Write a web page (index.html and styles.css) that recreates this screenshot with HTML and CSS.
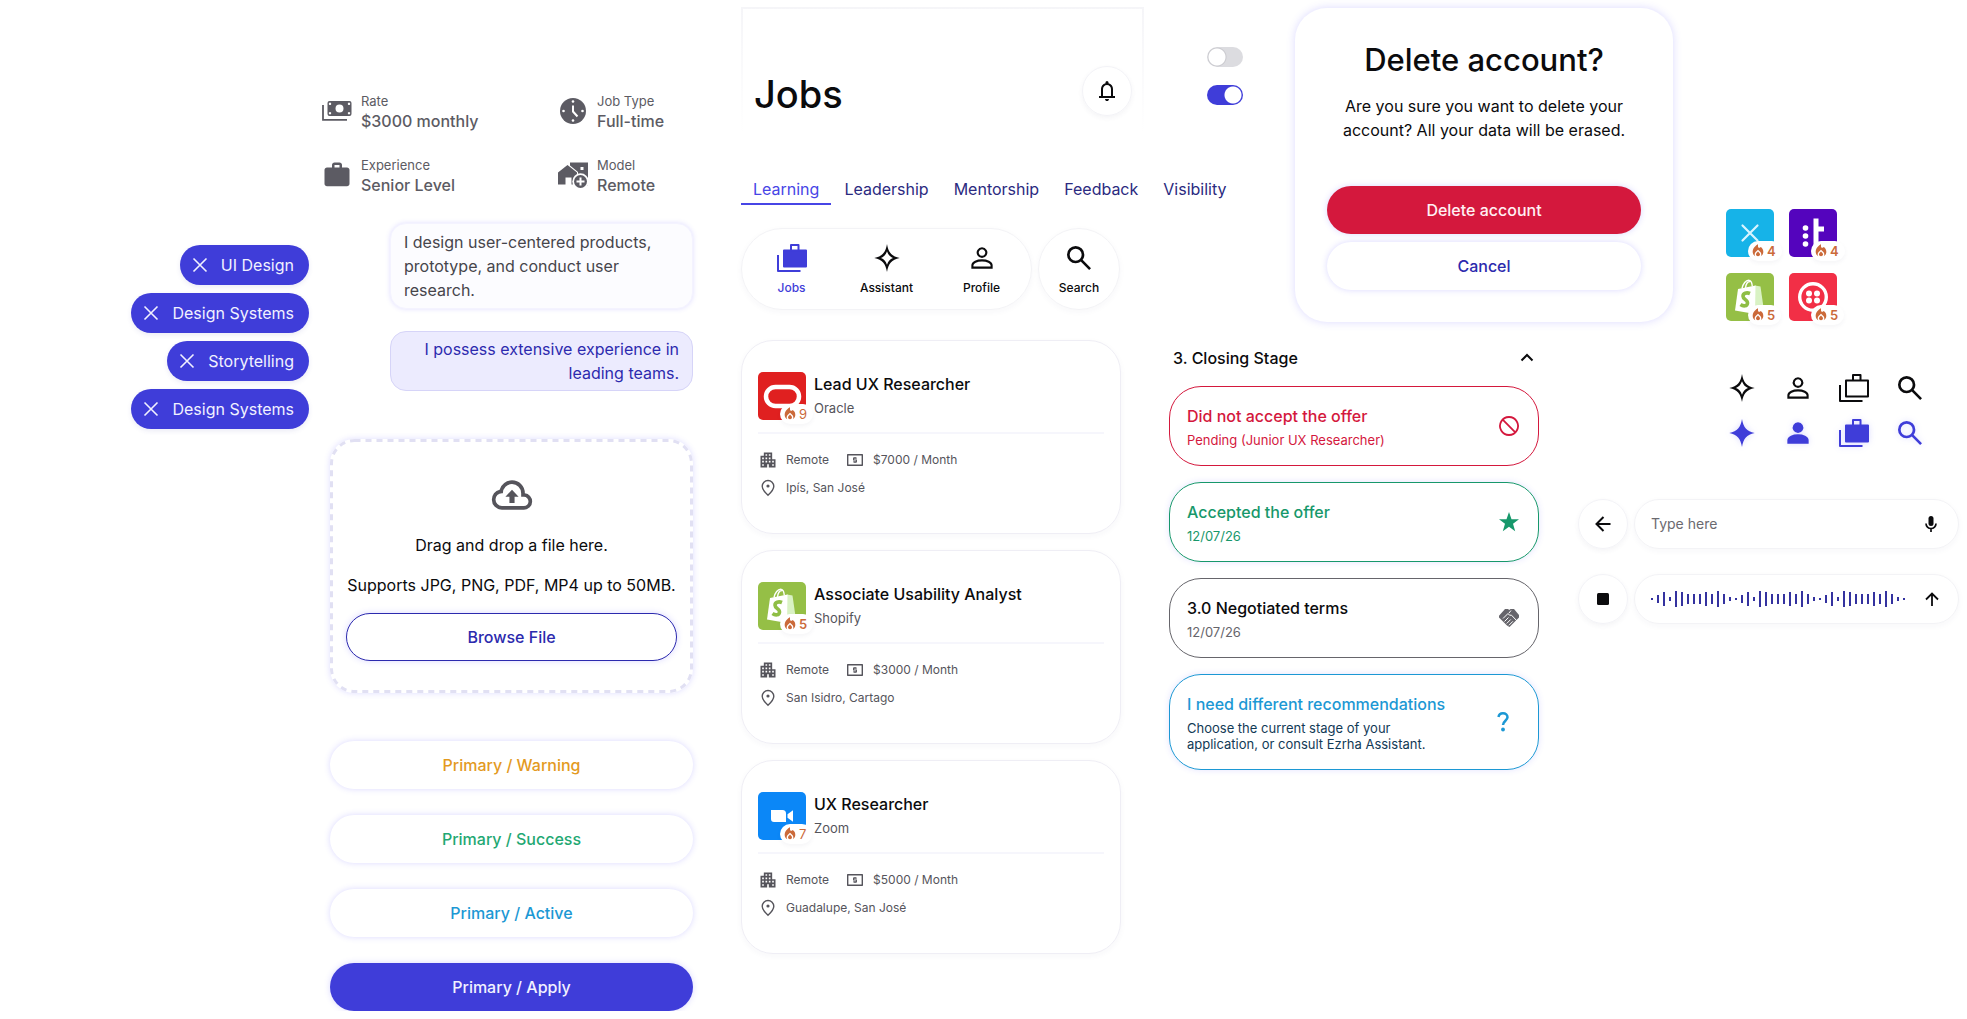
FILE: index.html
```html
<!DOCTYPE html>
<html lang="en">
  <head>
    <meta charset="UTF-8" />
    <meta name="viewport" content="width=device-width, initial-scale=1.0" />
    <title>Ezrha components</title>
    <link rel="stylesheet" href="styles.css">
  </head>
  <body>
    <!-- icon sprite -->
    <svg class="sprite" aria-hidden="true">
      <symbol id="close" viewBox="0 0 16 16"><path d="M1.5 1.5l13 13M14.5 1.5l-13 13" fill="none" stroke="currentColor" stroke-width="1.6" /></symbol>
      <symbol id="cash" viewBox="0 0 30 20">
        <path fill-rule="evenodd" d="M7.500 0h20a2 2 0 0 1 2 2v11a2 2 0 0 1-2 2h-20a2 2 0 0 1-2-2v-11a2 2 0 0 1 2-2zM17.500 3.500a4 4 0 1 0 0 8a4 4 0 1 0 0-8zM8 1.600a1.200 1.200 0 1 0 .01 0zM27 1.600a1.200 1.200 0 1 0 .01 0zM8 11a1.200 1.200 0 1 0 .01 0zM27 11a1.200 1.200 0 1 0 .01 0z" />
        <path d="M1 4v14.800h24" fill="none" stroke="currentColor" stroke-width="1.800" />
      </symbol>
      <symbol id="clock" viewBox="0 0 26 26">
        <circle cx="13" cy="13" r="13" />
        <path d="M13 7.500v6l4.500 5" fill="none" stroke="#fff" stroke-width="2" />
        <g fill="#fff"><circle cx="13" cy="3.500" r="1.300" /><circle cx="13" cy="22.500" r="1.300" /><circle cx="3.500" cy="13" r="1.300" /><circle cx="22.500" cy="13" r="1.300" /></g>
      </symbol>
      <symbol id="briefcase" viewBox="0 0 24 24"><path d="M4 21q-.825 0-1.412-.587T2 19V8q0-.825.588-1.412T4 6h4V4q0-.825.588-1.412T10 2h4q.825 0 1.413.588T16 4v2h4q.825 0 1.413.588T22 8v11q0 .825-.587 1.413T20 21zm6-15h4V4h-4z" /></symbol>
      <symbol id="home-work" viewBox="0 0 30 27">
        <path d="M0 23V11l9.500-7.500L19 11v12h-5.500v-7h-6v7z" />
        <path d="M12 1h18v23H20V10.500L12 4z" />
        <path d="M22.500 5.500h3v3h-3z" fill="#fff" />
        <circle cx="22.500" cy="20" r="8.200" fill="#fff" />
        <circle cx="22.500" cy="20" r="6.500" />
        <path d="M22.500 16v8M18.500 20h8" fill="none" stroke="#fff" stroke-width="2" />
      </symbol>
      <symbol id="cloud" viewBox="0 0 24 24">
        <path d="M6.500 20q-2.275 0-3.887-1.575T1 14.575q0-1.950 1.175-3.475T5.250 9.150q.625-2.300 2.500-3.725T12 4q2.925 0 4.963 2.038T19 11q1.725.2 2.863 1.488T23 15.500q0 1.875-1.312 3.188T18.500 20zm0-2h12q1.050 0 1.775-.725T21 15.500t-.725-1.775T18.500 13H17v-2q0-2.075-1.463-3.537T12 6T8.463 7.463T7 11h-.5q-1.450 0-2.475 1.025T3 14.500t1.025 2.475T6.500 18" />
        <path d="M10.600 16.300v-3.300H8.400L12 9.100l3.600 3.900h-2.200v3.300z" />
      </symbol>
      <symbol id="bell" viewBox="0 0 24 24"><path d="M4 19v-2h2v-7q0-2.075 1.250-3.687T10.500 4.200v-.7q0-.625.438-1.062T12 2t1.063.438T13.500 3.500v.7q2 .5 3.250 2.113T18 10v7h2v2zm8 3q-.825 0-1.412-.587T10 20h4q0 .825-.587 1.413T12 22m-4-5h8v-7q0-1.650-1.175-2.825T12 6T9.175 7.175T8 10z" /></symbol>
      <symbol id="jobs" viewBox="0 0 30 28">
        <path d="M7 6.500h22v16H7z" fill="none" stroke="currentColor" stroke-width="2" stroke-linejoin="round" />
        <path d="M14 6V1h7.500v5M1 11v16h22.500" fill="none" stroke="currentColor" stroke-width="2" stroke-linejoin="round" />
      </symbol>
      <symbol id="jobs-fill" viewBox="0 0 30 28">
        <path d="M7 6.500h22v16H7z" stroke="currentColor" stroke-width="2" stroke-linejoin="round" />
        <path d="M14 6V1h7.500v5M1 11v16h22.500" fill="none" stroke="currentColor" stroke-width="2" stroke-linejoin="round" />
      </symbol>
      <symbol id="spark" viewBox="0 0 26 28"><path fill-rule="evenodd" d="M13 0c1.500 8.500 4.500 12.300 12.700 14c-8.200 1.700-11.200 5.500-12.700 14c-1.500-8.500-4.500-12.300-12.700-14c8.200-1.700 11.200-5.500 12.700-14zM13 7.300c-1.300 3.500-2.900 5.400-6 6.700c3.100 1.300 4.700 3.200 6 6.700c1.300-3.500 2.900-5.400 6-6.700c-3.100-1.300-4.700-3.200-6-6.700z" /></symbol>
      <symbol id="spark-fill" viewBox="0 0 26 28"><path d="M13 0c1.500 8.500 4.500 12.300 12.700 14c-8.200 1.700-11.200 5.500-12.700 14c-1.500-8.500-4.500-12.300-12.700-14c8.200-1.700 11.200-5.500 12.700-14z" /></symbol>
      <symbol id="person" viewBox="0 0 32 32"><path d="M16 6.300a4.300 4.300 0 1 0 .01 0zM6.400 25.600v-2.300c0-3.100 4.600-4.900 9.600-4.900s9.600 1.800 9.600 4.900v2.300z" fill="none" stroke="currentColor" stroke-width="2.100" /></symbol>
      <symbol id="person-fill" viewBox="0 0 32 32"><path d="M16 6.300a4.300 4.300 0 1 0 .01 0zM6.400 25.600v-2.300c0-3.100 4.600-4.900 9.600-4.900s9.600 1.800 9.600 4.900v2.300z" stroke="currentColor" stroke-width="2.100" /></symbol>
      <symbol id="search" viewBox="0 0 24 24"><path d="m19.600 21l-6.300-6.300q-.75.6-1.725.95T9.500 16q-2.725 0-4.612-1.888T3 9.500t1.888-4.612T9.500 3t4.613 1.888T16 9.500q0 1.100-.35 2.075T14.700 13.300l6.300 6.300zM9.500 14q1.875 0 3.188-1.312T14 9.500t-1.312-3.187T9.500 5T6.313 6.313T5 9.500t1.313 3.188T9.500 14" /></symbol>
      <symbol id="building" viewBox="0 0 24 24"><path d="M3 21V7h4V3h10v8h4v10h-8v-4h-2v4zm2-2h2v-2H5zm0-4h2v-2H5zm0-4h2V9H5zm4 4h2v-2H9zm0-4h2V9H9zm0-4h2V5H9zm4 8h2v-2h-2zm0-4h2V9h-2zm0-4h2V5h-2zm4 12h2v-2h-2zm0-4h2v-2h-2z" /></symbol>
      <symbol id="money" viewBox="0 0 20 20">
        <path d="M2.700 4.700h14.600v10.600H2.700z" fill="none" stroke="currentColor" stroke-width="1.400" stroke-linejoin="round" />
        <path d="M11.700 8.100H8.600v1.900h2.800v1.900H8.300M10 6.900v1.200M10 11.900v1.200" fill="none" stroke="currentColor" stroke-width="1.100" />
      </symbol>
      <symbol id="pin" viewBox="0 0 20 20">
        <path d="M10 17.300c-3.600-3.300-5.800-6-5.800-9a5.800 5.800 0 0 1 11.600 0c0 3-2.200 5.700-5.800 9z" fill="none" stroke="currentColor" stroke-width="1.400" />
        <circle cx="10" cy="8" r="1.600" />
      </symbol>
      <symbol id="flame" viewBox="0 0 24 24"><path d="M12 12.900l-2.130 2.090C9.310 15.550 9 16.280 9 17.060 9 18.680 10.350 20 12 20s3-1.320 3-2.940c0-.78-.31-1.520-.87-2.070z" /><path d="M16 6l-.44.55C14.380 8.020 12 7.190 12 5.300V2S4 6 4 13c0 2.920 1.560 5.470 3.890 6.860C7.330 19.070 7 18.100 7 17.060c0-1.320.52-2.560 1.470-3.500L12 10.100l3.530 3.470C16.480 14.500 17 15.740 17 17.070c0 1.020-.31 1.960-.85 2.750 1.890-1.150 3.290-3.060 3.710-5.300.66-3.550-1.070-6.900-3.860-8.520z" /></symbol>
      <symbol id="chevron" viewBox="0 0 14 14"><path d="M1.500 9.500L7 4l5.500 5.500" fill="none" stroke="currentColor" stroke-width="2" /></symbol>
      <symbol id="block" viewBox="0 0 20 20"><path d="M10 1a9 9 0 1 0 .01 0zM3.700 3.700l12.600 12.600" fill="none" stroke="currentColor" stroke-width="1.800" /></symbol>
      <symbol id="star" viewBox="0 0 20 20"><path d="M10 0l2.500 7.200H20l-6 4.600 2.200 7.400-6.200-4.500-6.200 4.500L6 11.800 0 7.200h7.500z" /></symbol>
      <symbol id="handshake" viewBox="0 0 20 20">
        <path d="M0 7.800L6 1h3l1.200.9L11.500 1H15l5 6v2.500L10.500 19 8 17.500 0 9.500z" />
        <path d="M4 10.500l5-5 1.500 1.700h2L18 13M5.500 13.500l4-4M7.700 15.500l4-4M9.900 17.300l4-4M10 5l2-2.500" fill="none" stroke="#fff" stroke-width="1" />
      </symbol>
      <symbol id="question" viewBox="0 0 12 20">
        <path d="M1.500 5A4.500 4.300 0 0 1 6 1.300c2.600 0 4.500 1.700 4.500 4 0 3.200-4.500 3.800-4.500 7.700" fill="none" stroke="currentColor" stroke-width="2.500" />
        <circle cx="6" cy="17.500" r="1.900" />
      </symbol>
      <symbol id="back" viewBox="0 0 16 16"><path d="M15.500 8H1.500M8.500 1L1.500 8l7 7" fill="none" stroke="currentColor" stroke-width="2" /></symbol>
      <symbol id="up" viewBox="0 0 14 14"><path d="M7 14V1.500M1 7.500l6-6 6 6" fill="none" stroke="currentColor" stroke-width="1.800" /></symbol>
      <symbol id="stop" viewBox="0 0 12 12"><rect width="12" height="12" rx="1.500" /></symbol>
      <symbol id="mic" viewBox="0 0 12 16">
        <rect x="3.500" width="5" height="10" rx="2.500" />
        <path d="M1 7.500a5 5 0 0 0 10 0M6 12.500V16" fill="none" stroke="currentColor" stroke-width="1.700" />
      </symbol>
      <!-- company logos -->
      <symbol id="oracle" viewBox="0 0 48 48"><rect x="8" y="15" width="33" height="19" rx="9.500" fill="none" stroke="#fff" stroke-width="4.500" /></symbol>
      <symbol id="shopify" viewBox="0 0 48 48">
        <path d="M29 12.500l5.500 1L38 38l-9 3z" fill="#d9f2c4" />
        <path d="M12 16l17.500-3.500L29 41 9 37.500z" fill="#fff" />
        <path d="M16 15.500c1-5 4-8.300 6.500-8.300 2 0 3.500 2 3.800 6M19.500 15c.5-4 2.500-6.500 4.500-6.500" fill="none" stroke="#fff" stroke-width="1.400" />
        <path d="M24 20.500c-3.500-1.500-7-.2-7 2.700 0 3.300 5 3.600 4.500 7-.4 3-4 3.500-7 1.300" fill="none" stroke="#8fbe45" stroke-width="3.600" />
      </symbol>
      <symbol id="zoom" viewBox="0 0 48 48"><path d="M13 18h11.500a3.500 3.500 0 0 1 3.500 3.500V30H16a3 3 0 0 1-3-3zM29.500 22.300l5.500-4v11.400l-5.500-4z" fill="#fff" /></symbol>
      <symbol id="cross" viewBox="0 0 48 48"><path d="M16.500 16.500l15 15M31.500 16.500l-15 15" fill="none" stroke="#d8f4ff" stroke-width="2.200" stroke-linecap="round" /></symbol>
      <symbol id="dots-t" viewBox="0 0 48 48">
        <path d="M24.500 9.500h5v8h5.500v5h-5.500V40h-5z" fill="#fff" />
        <g fill="#fff"><circle cx="16.500" cy="19" r="2.800" /><circle cx="16.500" cy="27" r="2.800" /><circle cx="16.500" cy="35" r="2.800" /></g>
      </symbol>
      <symbol id="twilio" viewBox="0 0 48 48">
        <circle cx="24" cy="24" r="13.300" fill="none" stroke="#fff" stroke-width="3.400" />
        <g fill="#fff"><circle cx="20" cy="20.500" r="3" /><circle cx="28" cy="20.500" r="3" /><circle cx="20" cy="27.500" r="3" /><circle cx="28" cy="27.500" r="3" /></g>
      </symbol>
    </svg>

    <main class="board">
      <section class="chips">
        <button class="chip"><svg><use href="#close" /></svg>UI Design</button>
        <button class="chip"><svg><use href="#close" /></svg>Design Systems</button>
        <button class="chip"><svg><use href="#close" /></svg>Storytelling</button>
        <button class="chip"><svg><use href="#close" /></svg>Design Systems</button>
      </section>

      <section class="profile">
        <dl class="facts">
          <div class="fact">
            <svg class="fact-icon"><use href="#cash" /></svg>
            <dt>Rate</dt>
            <dd>$3000 monthly</dd>
          </div>
          <div class="fact">
            <svg class="fact-icon small"><use href="#clock" /></svg>
            <dt>Job Type</dt>
            <dd>Full-time</dd>
          </div>
          <div class="fact">
            <svg class="fact-icon"><use href="#briefcase" /></svg>
            <dt>Experience</dt>
            <dd>Senior Level</dd>
          </div>
          <div class="fact">
            <svg class="fact-icon"><use href="#home-work" /></svg>
            <dt>Model</dt>
            <dd>Remote</dd>
          </div>
        </dl>

        <div class="chat">
          <p class="bubble">I design user-centered products, prototype, and conduct user research.</p>
          <p class="bubble mine">I possess extensive experience in leading teams.</p>
        </div>

        <div class="upload">
          <svg class="upload-border" aria-hidden="true"><rect x="1.5" y="1.5" rx="23" /></svg>
          <svg class="upload-icon"><use href="#cloud" /></svg>
          <p>Drag and drop a file here.</p>
          <p>Supports JPG, PNG, PDF, MP4 up to 50MB.</p>
          <button class="btn outline">Browse File</button>
        </div>

        <div class="buttons">
          <button class="btn warning">Primary / Warning</button>
          <button class="btn success">Primary / Success</button>
          <button class="btn active">Primary / Active</button>
          <button class="btn apply">Primary / Apply</button>
        </div>
      </section>

      <div class="app">
        <div class="top">
          <div class="navigation">
            <div class="header-row">
              <header class="page-header">
                <h1>Jobs</h1>
                <button class="round" aria-label="Notifications"><svg class="icon-24"><use href="#bell" /></svg></button>
              </header>
              <div class="toggles">
                <input type="checkbox" class="toggle" aria-label="Alerts" />
                <input type="checkbox" class="toggle" aria-label="Messages" checked />
              </div>
            </div>

            <nav class="tabs">
              <a href="#" class="current">Learning</a>
              <a href="#">Leadership</a>
              <a href="#">Mentorship</a>
              <a href="#">Feedback</a>
              <a href="#">Visibility</a>
            </nav>

            <nav class="dock">
              <div class="dock-group">
                <a href="#" class="current"><svg class="icon-30"><use href="#jobs-fill" /></svg>Jobs</a>
                <a href="#"><svg class="icon-28"><use href="#spark" /></svg>Assistant</a>
                <a href="#"><svg class="icon-32"><use href="#person" /></svg>Profile</a>
              </div>
              <a href="#" class="dock-search"><svg class="icon-32"><use href="#search" /></svg>Search</a>
            </nav>
          </div>

          <section class="modal">
            <h2>Delete account?</h2>
            <p>Are you sure you want to delete your account? All your data will be erased.</p>
            <button class="btn danger">Delete account</button>
            <button class="btn cancel">Cancel</button>
          </section>

          <div class="logos">
            <div class="logo cross"><svg><use href="#cross" /></svg><span class="badge"><svg><use href="#flame" /></svg>4</span></div>
            <div class="logo dots"><svg><use href="#dots-t" /></svg><span class="badge"><svg><use href="#flame" /></svg>4</span></div>
            <div class="logo shopify"><svg><use href="#shopify" /></svg><span class="badge"><svg><use href="#flame" /></svg>5</span></div>
            <div class="logo twilio"><svg><use href="#twilio" /></svg><span class="badge"><svg><use href="#flame" /></svg>5</span></div>
          </div>
        </div>

        <div class="bottom">
          <section class="jobs">
            <article class="job">
              <div class="job-head">
                <div class="logo oracle"><svg><use href="#oracle" /></svg><span class="badge light"><svg><use href="#flame" /></svg>9</span></div>
                <div>
                  <h3>Lead UX Researcher</h3>
                  <p>Oracle</p>
                </div>
              </div>
              <ul class="job-info">
                <li><svg><use href="#building" /></svg>Remote</li>
                <li><svg><use href="#money" /></svg>$7000 / Month</li>
                <li class="place"><svg><use href="#pin" /></svg>Ipís, San José</li>
              </ul>
            </article>
            <article class="job">
              <div class="job-head">
                <div class="logo shopify"><svg><use href="#shopify" /></svg><span class="badge"><svg><use href="#flame" /></svg>5</span></div>
                <div>
                  <h3>Associate Usability Analyst</h3>
                  <p>Shopify</p>
                </div>
              </div>
              <ul class="job-info">
                <li><svg><use href="#building" /></svg>Remote</li>
                <li><svg><use href="#money" /></svg>$3000 / Month</li>
                <li class="place"><svg><use href="#pin" /></svg>San Isidro, Cartago</li>
              </ul>
            </article>
            <article class="job">
              <div class="job-head">
                <div class="logo zoom"><svg><use href="#zoom" /></svg><span class="badge light"><svg><use href="#flame" /></svg>7</span></div>
                <div>
                  <h3>UX Researcher</h3>
                  <p>Zoom</p>
                </div>
              </div>
              <ul class="job-info">
                <li><svg><use href="#building" /></svg>Remote</li>
                <li><svg><use href="#money" /></svg>$5000 / Month</li>
                <li class="place"><svg><use href="#pin" /></svg>Guadalupe, San José</li>
              </ul>
            </article>
          </section>

          <section class="stages">
            <button class="stage-toggle" aria-expanded="true">3. Closing Stage<svg><use href="#chevron" /></svg></button>
            <article class="stage rejected">
              <div>
                <h3>Did not accept the offer</h3>
                <p>Pending (Junior UX Researcher)</p>
              </div>
              <svg><use href="#block" /></svg>
            </article>
            <article class="stage accepted">
              <div>
                <h3>Accepted the offer</h3>
                <p>12/07/26</p>
              </div>
              <svg><use href="#star" /></svg>
            </article>
            <article class="stage terms">
              <div>
                <h3>3.0 Negotiated terms</h3>
                <p>12/07/26</p>
              </div>
              <svg><use href="#handshake" /></svg>
            </article>
            <article class="stage help">
              <div>
                <h3>I need different recommendations</h3>
                <p>Choose the current stage of your application, or consult Ezrha Assistant.</p>
              </div>
              <svg><use href="#question" /></svg>
            </article>
          </section>

          <section class="side">
            <div class="icons">
              <svg class="icon-28"><use href="#spark" /></svg>
              <svg class="icon-32"><use href="#person" /></svg>
              <svg class="icon-30"><use href="#jobs" /></svg>
              <svg class="icon-32"><use href="#search" /></svg>
              <svg class="icon-28 blue"><use href="#spark-fill" /></svg>
              <svg class="icon-32 blue"><use href="#person-fill" /></svg>
              <svg class="icon-30 blue"><use href="#jobs-fill" /></svg>
              <svg class="icon-32 blue"><use href="#search" /></svg>
            </div>

            <form class="composer">
              <button type="button" class="round" aria-label="Back"><svg class="icon-16"><use href="#back" /></svg></button>
              <div class="field">
                <input type="text" placeholder="Type here" aria-label="Message" />
                <button type="button" aria-label="Record"><svg class="icon-16"><use href="#mic" /></svg></button>
              </div>
            </form>
            <div class="composer">
              <button type="button" class="round" aria-label="Stop"><svg class="icon-12"><use href="#stop" /></svg></button>
              <div class="field">
                <div class="wave"></div>
                <button type="button" aria-label="Send"><svg class="icon-14"><use href="#up" /></svg></button>
              </div>
            </div>
          </section>
        </div>
      </div>
    </main>
    <script src="script.js"></script>
  </body>
</html>
```
FILE: styles.css
```css
* {
  margin: 0;
  padding: 0;
  box-sizing: border-box;
}

body {
  background-color: #fff;
  color: #0b0b0d;
  font-family: Inter, "Liberation Sans", sans-serif;
  font-size: 16px;
  line-height: 24px;
}

svg {
  display: block;
  flex: none;
  fill: currentColor;
}

.sprite {
  display: none;
}

button {
  border: none;
  background: none;
  font: inherit;
  color: inherit;
  cursor: pointer;
}

a {
  color: inherit;
  text-decoration: none;
}

h1,
h2,
h3 {
  font-weight: 500;
}

.board {
  display: grid;
  grid-template-columns: 309fr 384fr 1274fr;
  padding-top: 7px;
}

/* icon sizes */
.icon-12 {
  width: 12px;
  height: 12px;
}
.icon-14 {
  width: 14px;
  height: 14px;
}
.icon-16 {
  width: 16px;
  height: 16px;
}
.icon-24 {
  width: 24px;
  height: 24px;
}
.icon-28 {
  width: 28px;
  height: 28px;
}
.icon-30 {
  width: 30px;
  height: 28px;
}
.icon-32 {
  width: 32px;
  height: 32px;
}
.blue {
  color: #3f3dd9;
  filter: drop-shadow(0 0 3px rgba(80, 80, 255, 0.2));
}

/* chips */
.chips {
  display: flex;
  flex-direction: column;
  align-items: flex-end;
  gap: 8px;
  padding-top: 238px;
}
.chip {
  display: flex;
  align-items: center;
  gap: 13px;
  height: 40px;
  padding: 0 15px 0 12px;
  border-radius: 20px;
  background-color: #3f3dd9;
  color: #f1f1ff;
  box-shadow: 0 2px 5px rgba(60, 60, 160, 0.1);
}
.chip svg {
  width: 16px;
  height: 16px;
}

/* profile column */
.profile {
  padding: 84px 0 0 13px;
}
.facts {
  display: grid;
  grid-template-columns: 236fr 135fr;
  row-gap: 24px;
}
.fact {
  display: grid;
  grid-template-columns: 30px 1fr;
  grid-template-rows: 20px 20px;
  column-gap: 9px;
  align-items: center;
  line-height: 20px;
  color: #5c5b63;
}
.fact-icon {
  grid-row: 1 / 3;
  width: 30px;
  height: 30px;
}
.fact-icon.small {
  width: 26px;
  height: 26px;
  justify-self: center;
}
.fact dt {
  font-size: 13px;
}
.fact dd {
  font-weight: 500;
}

.chat {
  display: flex;
  flex-direction: column;
  gap: 22px;
  margin: 28px 0 0 68px;
}
.bubble {
  padding: 6px 13px;
  border: 1px solid #f4f3ff;
  border-radius: 16px;
  background-color: #fcfcff;
  color: #46454b;
  box-shadow: 0 0 5px rgba(90, 80, 255, 0.18);
}
.bubble.mine {
  padding: 5px 13px;
  border-color: #d6d4f8;
  background-color: #ecebfe;
  color: #2c2aae;
  text-align: right;
  box-shadow: none;
}

.upload {
  position: relative;
  display: flex;
  flex-direction: column;
  align-items: center;
  gap: 16px;
  margin: 48px 0 0 8px;
  padding: 34px 16px 32px;
  border-radius: 24px;
  text-align: center;
  box-shadow: 0 0 6px rgba(90, 80, 255, 0.2);
}
.upload-border {
  position: absolute;
  inset: 0;
  width: 100%;
  height: 100%;
  pointer-events: none;
}
.upload-border rect {
  width: calc(100% - 3px);
  height: calc(100% - 3px);
  fill: none;
  stroke: #e1e0f3;
  stroke-width: 3px;
  stroke-dasharray: 6 5;
}
.upload p {
  white-space: nowrap;
}
.upload-icon {
  width: 44px;
  height: 44px;
  color: #55545b;
}

.buttons {
  display: flex;
  flex-direction: column;
  gap: 26px;
  margin: 48px 0 0 8px;
}
.btn {
  width: 100%;
  height: 48px;
  border-radius: 24px;
  background-color: #fff;
  font-weight: 500;
  box-shadow: 0 0 6px rgba(90, 80, 255, 0.22);
}
.outline {
  border: 1px solid #2c2aae;
  color: #2c2aae;
}
.warning {
  color: #e39a1f;
}
.success {
  color: #1fa873;
}
.active {
  color: #1c98d4;
}
.apply {
  background-color: #3f3dd9;
  color: #f1f1ff;
}
.danger {
  background-color: #d4183d;
  color: #fff0f3;
}
.cancel {
  color: #2c2aae;
}

/* right part */
.app {
  padding-left: 48px;
}
.top {
  display: grid;
  grid-template-columns: 554fr 378fr 294fr;
  align-items: start;
  margin-bottom: 18px;
}
.header-row {
  display: grid;
  grid-template-columns: 403fr 151fr;
}
.page-header {
  display: flex;
  align-items: flex-end;
  justify-content: space-between;
  height: 124px;
  padding: 0 10px 15px 11px;
  border: 2px solid;
  border-bottom: none;
  border-image: linear-gradient(#f5f5f8, #fff) 2;
}
.page-header h1 {
  font-size: 38px;
  line-height: 44px;
}
.round {
  display: flex;
  flex: none;
  align-items: center;
  justify-content: center;
  width: 50px;
  height: 50px;
  border: 1px solid #f3f3f7;
  border-radius: 50%;
  box-shadow: 0 2px 5px rgba(60, 60, 100, 0.06);
}

.toggles {
  display: flex;
  flex-direction: column;
  gap: 18px;
  padding: 40px 0 0 63px;
}
.toggle {
  width: 36px;
  height: 20px;
  appearance: none;
  border-radius: 10px;
  background: radial-gradient(circle at 10px 10px, #fff 8px, #c9c9ce 9px, #dcdce0 10px);
  cursor: pointer;
}
.toggle:checked {
  background: radial-gradient(circle at 26px 10px, #fff 8px, #3f3dd9 9px);
}

.tabs {
  display: flex;
  gap: 1px;
  margin-top: 34px;
  color: #2b2a80;
}
.tabs a {
  padding: 12px 12px 2px;
  border-bottom: 2px solid transparent;
}
.tabs .current {
  border-color: #4745e6;
  color: #4745e6;
}

.dock {
  display: flex;
  gap: 6px;
  margin-top: 23px;
}
.dock-group,
.dock-search {
  height: 82px;
  border: 1px solid #f3f3f6;
  border-radius: 41px;
  box-shadow: 0 2px 6px rgba(60, 60, 100, 0.04);
}
.dock-group {
  display: flex;
  padding: 0 2px;
}
.dock-search {
  width: 82px;
}
.dock a {
  display: grid;
  grid-template-rows: 32px 16px;
  row-gap: 6px;
  align-content: center;
  place-items: center;
  font-size: 12px;
  font-weight: 500;
  line-height: 16px;
}
.dock-group a {
  width: 95px;
}
.dock .current {
  color: #3f3dd9;
}

.modal {
  display: flex;
  flex-direction: column;
  align-items: center;
  margin-top: 1px;
  padding: 32px;
  border-radius: 32px;
  text-align: center;
  box-shadow: 0 0 8px rgba(90, 80, 255, 0.22);
}
.modal h2 {
  font-size: 31px;
  line-height: 40px;
}
.modal p {
  max-width: 300px;
  margin: 14px 0 44px;
}
.modal .cancel {
  margin-top: 8px;
}

/* company logos */
.logos {
  display: grid;
  grid-template-columns: 48px 48px;
  gap: 16px 15px;
  margin: 202px 0 0 53px;
}
.logo {
  position: relative;
  width: 48px;
  height: 48px;
  border-radius: 5px;
}
.logo > svg {
  width: 48px;
  height: 48px;
}
.logo.oracle {
  background-color: #e02020;
}
.logo.shopify {
  background-color: #95bf46;
}
.logo.zoom {
  background-color: #0b87f7;
}
.logo.cross {
  background-color: #16b3e8;
}
.logo.dots {
  background-color: #5404bd;
}
.logo.twilio {
  background-color: #f22f46;
}
.badge {
  position: absolute;
  left: 22px;
  top: 32px;
  display: flex;
  align-items: center;
  gap: 1px;
  height: 20px;
  padding: 0 6px 0 2px;
  border-radius: 10px;
  background-color: #fff;
  color: #cb6a3a;
  font-size: 13px;
  font-weight: 600;
  box-shadow: 0 2px 4px rgba(60, 60, 100, 0.05);
}
.badge.light {
  font-weight: 400;
}
.badge svg {
  width: 16px;
  height: 16px;
}

.bottom {
  display: grid;
  grid-template-columns: 428fr 409fr 389fr;
  align-items: start;
}

/* job cards */
.jobs {
  display: flex;
  flex-direction: column;
  gap: 16px;
  padding-right: 48px;
}
.job {
  padding: 31px 16px 35px;
  border: 1px solid #efeef5;
  border-radius: 32px;
  box-shadow: 0 2px 6px rgba(60, 60, 100, 0.04);
}
.job-head {
  display: flex;
  gap: 8px;
  padding-bottom: 12px;
  border-bottom: 2px solid #f6f6fc;
}
.job-head p {
  font-size: 13px;
  color: #55545b;
}
.job-head h3 {
  font-size: 16px;
}
.job-info {
  display: flex;
  flex-wrap: wrap;
  gap: 8px 16px;
  padding-top: 16px;
  list-style: none;
  font-size: 12px;
  line-height: 20px;
  color: #55545b;
}
.job-info li {
  display: flex;
  gap: 8px;
}
.job-info svg {
  width: 20px;
  height: 20px;
}
.job-info .place {
  width: 100%;
}

/* stages */
.stages {
  display: flex;
  flex-direction: column;
  gap: 16px;
  padding: 6px 39px 0 0;
}
.stage-toggle {
  display: flex;
  align-items: center;
  justify-content: space-between;
  padding: 0 5px 0 4px;
  font-weight: 500;
}
.stage-toggle svg {
  width: 14px;
  height: 14px;
}
.stage {
  display: flex;
  align-items: center;
  justify-content: space-between;
  padding: 17px 19px 17px 17px;
  border: 1px solid currentColor;
  border-radius: 32px;
}
.stage h3 {
  font-size: 16px;
}
.stage p {
  max-width: 240px;
  margin-top: 4px;
  font-size: 13px;
  line-height: 16px;
}
.stage svg {
  width: 20px;
  height: 20px;
}
.rejected {
  color: #d4183d;
}
.rejected p {
  white-space: nowrap;
}
.accepted {
  color: #17986b;
  box-shadow: 0 0 6px rgba(90, 80, 255, 0.16);
}
.terms {
  color: #66656b;
}
.terms h3 {
  color: #0b0b0d;
}
.help {
  color: #1c98d4;
  padding-right: 25px;
  box-shadow: 0 0 6px rgba(90, 80, 255, 0.16);
}
.help p {
  color: #123a56;
}

/* icons and message fields */
.side {
  padding: 32px 8px 0 0;
}
.icons {
  display: grid;
  grid-template-columns: repeat(4, 32px);
  grid-auto-rows: 32px;
  gap: 13px 24px;
  place-items: center;
  margin: 0 0 50px 148px;
}
.composer {
  display: flex;
  gap: 6px;
}
.composer + .composer {
  margin-top: 25px;
}
.field {
  display: flex;
  flex: 1;
  align-items: center;
  justify-content: space-between;
  height: 50px;
  padding: 0 19px 0 16px;
  border: 1px solid #f3f3f6;
  border-radius: 25px;
  box-shadow: 0 2px 6px rgba(60, 60, 100, 0.04);
}
.field input {
  flex: 1;
  min-width: 0;
  border: none;
  outline: none;
  background: none;
  font: inherit;
  font-size: 14px;
}
.field input::placeholder {
  color: #6b6a70;
}
.wave {
  display: flex;
  align-items: center;
  gap: 4px;
  height: 18px;
}
.wave i {
  width: 2px;
  background-color: #34329f;
}
```
FILE: script.js
```js
// draws the bars of the voice message, the pattern repeats three times
const wave = document.querySelector(".wave");
const pattern = [2, 8, 14, 4, 16, 14, 10, 10, 10, 14, 10, 16, 10, 4];
const bars = [...pattern, ...pattern, ...pattern, 2];

bars.forEach((height) => {
  const bar = document.createElement("i");
  bar.style.height = height + "px";
  wave.appendChild(bar);
});
```
